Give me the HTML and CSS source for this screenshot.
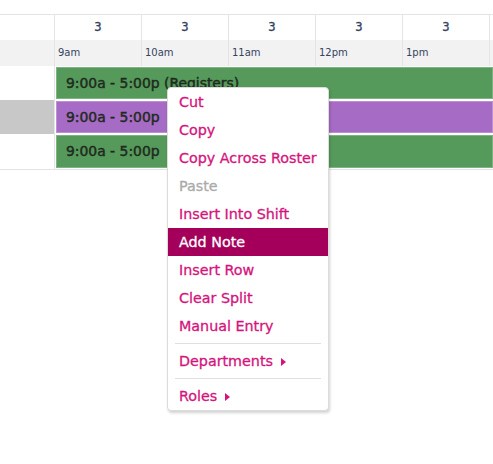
FILE: index.html
```html
<!DOCTYPE html>
<html lang="en">
<head>
    <meta charset="UTF-8">
    <meta name="viewport" content="width=device-width, initial-scale=1.0">
    <title>Roster</title>
    <link rel="stylesheet" href="styles.css">
</head>
<body>
    <div class="roster">
        <div class="row head-counts">
            <div class="cell lead"></div>
            <div class="cell">3</div>
            <div class="cell">3</div>
            <div class="cell">3</div>
            <div class="cell">3</div>
            <div class="cell">3</div>
            <div class="cell">3</div>
        </div>
        <div class="row head-times">
            <div class="cell lead"></div>
            <div class="cell">9am</div>
            <div class="cell">10am</div>
            <div class="cell">11am</div>
            <div class="cell">12pm</div>
            <div class="cell">1pm</div>
            <div class="cell">2pm</div>
        </div>
        <div class="shift-row">
            <div class="lead"></div>
            <div class="bar green">9:00a - 5:00p (Registers)</div>
        </div>
        <div class="shift-row selected">
            <div class="lead"></div>
            <div class="bar purple">9:00a - 5:00p</div>
        </div>
        <div class="shift-row">
            <div class="lead"></div>
            <div class="bar green">9:00a - 5:00p</div>
        </div>
    </div>

    <ul class="menu">
        <li>Cut</li>
        <li>Copy</li>
        <li>Copy Across Roster</li>
        <li class="disabled">Paste</li>
        <li>Insert Into Shift</li>
        <li class="active">Add Note</li>
        <li>Insert Row</li>
        <li>Clear Split</li>
        <li>Manual Entry</li>
        <li class="sep"></li>
        <li class="sub">Departments</li>
        <li class="sep"></li>
        <li class="sub">Roles</li>
    </ul>
</body>
</html>
```

FILE: styles.css
```css
body {
    margin: 0;
    font-family: "DejaVu Sans", sans-serif;
    background: #fff;
    color: #34445f;
}
.roster {
    width: 493px;
    overflow: hidden;
    padding-top: 14px;
}
.row {
    display: flex;
    width: 700px;
}
.cell {
    flex: 0 0 86px;
    border-right: 1px solid #e4e4e4;
}
.cell.lead {
    flex-basis: 54px;
}
.head-counts {
    border-top: 1px solid #e4e4e4;
    height: 25px;
}
.head-counts .cell {
    text-align: center;
    font-size: 11.5px;
    -webkit-text-stroke: 0.4px #34445f;
    line-height: 25px;
}
.head-times {
    height: 26px;
    background: #f2f2f2;
}
.head-times .cell {
    font-size: 10px;
    line-height: 26px;
    padding-left: 3px;
    flex-basis: 83px;
}
.head-times .cell.lead {
    flex-basis: 54px;
    padding-left: 0;
}
.shift-row {
    display: flex;
    height: 34px;
}
.shift-row:last-child {
    border-bottom: 1px solid #e4e4e4;
    height: 35px;
}
.shift-row .lead {
    flex: 0 0 55px;
    border-right: 1px solid #e4e4e4;
    box-sizing: border-box;
}
.shift-row.selected .lead {
    background: #c8c8c8;
}
.bar {
    flex: 1;
    margin: 1px 0 1px 1px;
    padding-left: 9px;
    border: 1px solid rgba(255, 255, 255, 0.25);
    font-size: 13.9px;
    -webkit-text-stroke: 0.45px #1f2a1f;
    line-height: 30px;
    color: #1f2a1f;
    white-space: nowrap;
}
.shift-row:first-of-type .bar {
    margin-top: 0;
}
.green {
    background: #559a5a;
}
.purple {
    background: #a66bc4;
}
.menu {
    position: absolute;
    left: 167px;
    top: 87px;
    width: 162px;
    margin: 0;
    padding: 0;
    list-style: none;
    background: #fff;
    border: 1px solid #dcdcdc;
    border-radius: 4px;
    box-shadow: 1px 2px 3px rgba(0, 0, 0, 0.18);
    box-sizing: border-box;
}
.menu li {
    height: 28px;
    line-height: 28px;
    padding-left: 11px;
    font-size: 14.3px;
    color: #d4147c;
    -webkit-text-stroke: 0.3px #d4147c;
}
.menu li.disabled {
    color: #aaaaaa;
    -webkit-text-stroke-color: #aaaaaa;
}
.menu li.active {
    background: #a4005b;
    color: #fff;
    -webkit-text-stroke-color: #fff;
}
.menu li.sep {
    height: 1px;
    padding: 0;
    margin: 3px 7px 3px;
    background: #e0e0e0;
}
.menu li.sub::after {
    content: "";
    display: inline-block;
    margin-left: 8px;
    border-left: 5px solid #d4147c;
    border-top: 4px solid transparent;
    border-bottom: 4px solid transparent;
    vertical-align: 0;
}
```
